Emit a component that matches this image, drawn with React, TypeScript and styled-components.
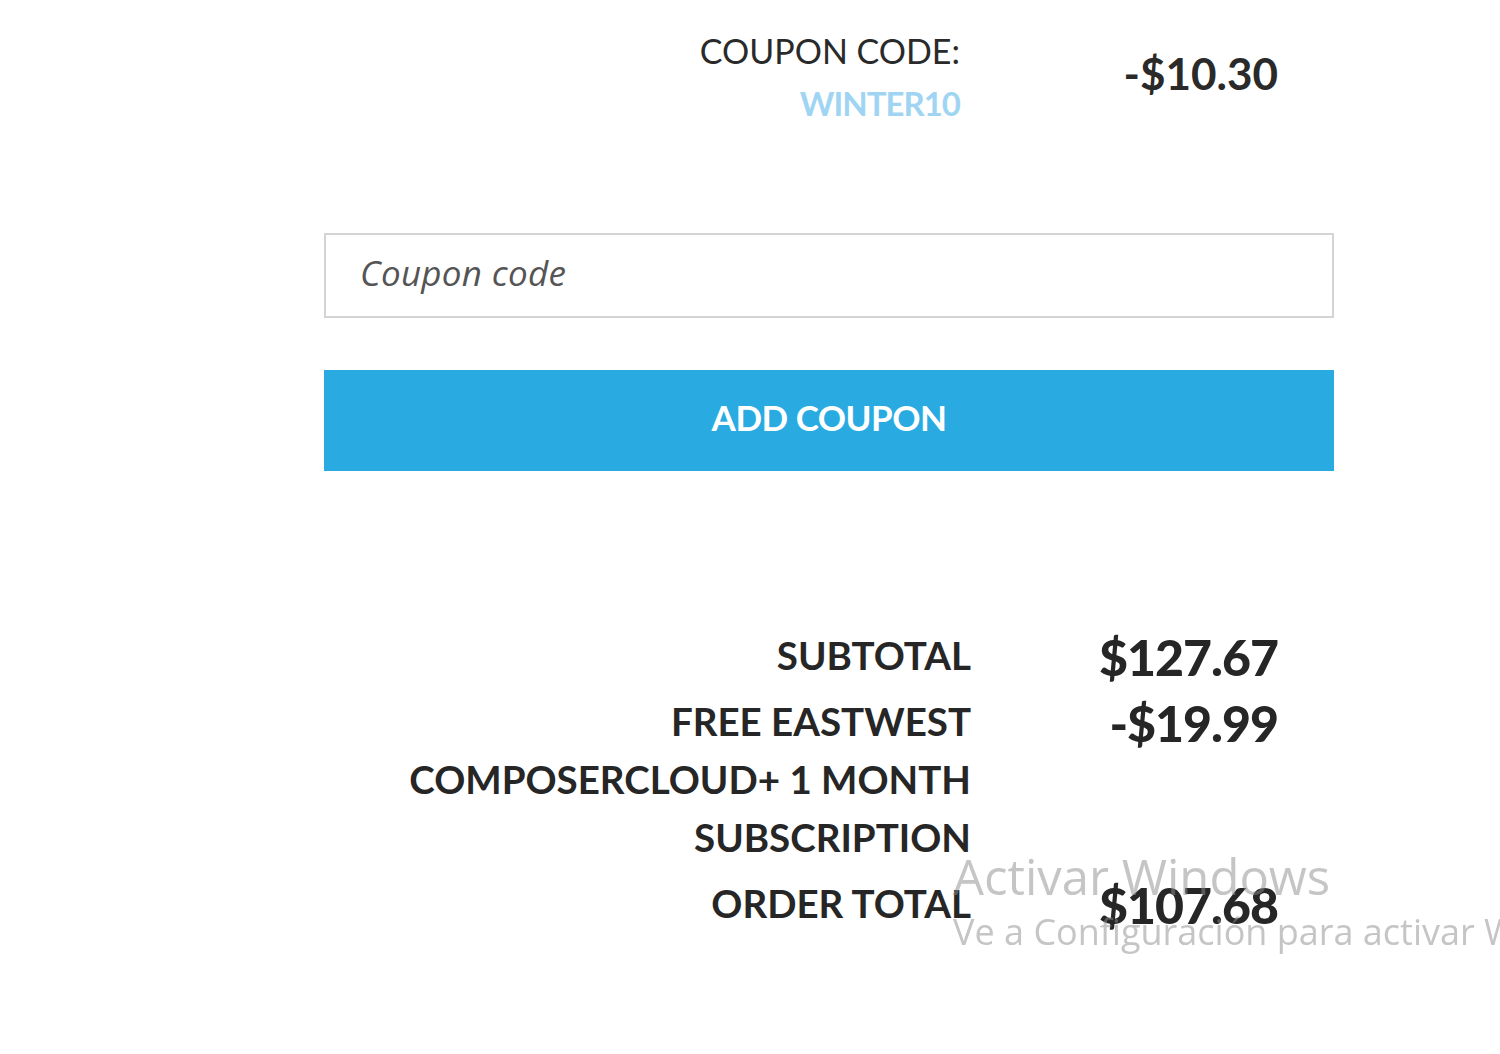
import React from "react";
import styled, { createGlobalStyle } from "styled-components";

const GlobalStyle = createGlobalStyle`
	html, body {
		margin: 0;
		padding: 0;
		background: #fff;
		overflow: hidden;
	}
	body {
		font-family: Lato, "Liberation Sans", sans-serif;
		color: #262626;
	}
`;

const Page = styled.div`
	width: 1010px;
	margin-left: 324px;
	padding-top: 25px;
	height: 1054px;
	box-sizing: border-box;
`;

const SummaryRow = styled.div<{ $valueWidth: number }>`
	display: grid;
	grid-template-columns: 1fr ${p => p.$valueWidth}px;
	padding-right: 56px;
	align-items: start;
`;

const CouponLabel = styled.div`
	text-align: right;
	font-size: 34px;
	line-height: 52px;
	font-weight: 400;
	color: #2a2a2a;
`;

const CouponName = styled.div`
	color: #9fd4f2;
	font-weight: 700;
	font-size: 33px;
	letter-spacing: -1px;
`;

const CouponValue = styled.div`
	text-align: right;
	font-size: 44px;
	font-weight: 700;
	line-height: 52px;
	padding-top: 22px;
	color: #2a2a2a;
`;

const CouponForm = styled.div`
	display: flex;
	flex-direction: column;
	gap: 52px;
	margin-top: 104px;
`;

const CouponInput = styled.input`
	height: 85px;
	box-sizing: border-box;
	border: 2px solid #d4d4d4;
	padding: 0 34px 6px;
	font-family: "Open Sans", "Liberation Sans", sans-serif;
	font-size: 35px;
	font-style: italic;
	letter-spacing: 0.3px;
	color: #333;
	outline: none;
	&::placeholder {
		color: #555;
	}
`;

const AddButton = styled.button`
	height: 101px;
	border: none;
	padding: 0 0 8px;
	background: #29abe2;
	color: #fff;
	font-family: Lato, "Liberation Sans", sans-serif;
	font-size: 35px;
	font-weight: 700;
	letter-spacing: -0.5px;
	cursor: pointer;
`;

const Totals = styled.div`
	display: flex;
	flex-direction: column;
	gap: 8px;
	margin-top: 155px;
`;

const TotalLabel = styled.div`
	text-align: right;
	font-size: 38.5px;
	font-weight: 700;
	line-height: 58px;
	color: #262626;
`;

const TotalValue = styled.div`
	text-align: right;
	font-size: 50px;
	font-weight: 900;
	line-height: 54px;
	padding-top: 4px;
	letter-spacing: -1px;
	color: #262626;
`;

const Watermark = styled.div`
	position: fixed;
	left: 953px;
	top: 844px;
	font-family: "Open Sans", "Noto Sans", sans-serif;
	color: rgba(140, 140, 140, 0.5);
	white-space: nowrap;
	pointer-events: none;
`;

const WatermarkTitle = styled.div`
	font-size: 49px;
	line-height: 64px;
`;

const WatermarkText = styled.div`
	font-size: 36px;
	line-height: 48px;
`;

const totals = [
	{ label: "SUBTOTAL", value: "$127.67" },
	{ label: <>FREE EASTWEST<br />COMPOSERCLOUD+ 1 MONTH<br />SUBSCRIPTION</>, value: "-$19.99" },
	{ label: "ORDER TOTAL", value: "$107.68" },
];

const App: React.FC = () => {
	return (
		<>
			<GlobalStyle />
			<Page>
				<SummaryRow $valueWidth={318}>
					<CouponLabel>
						COUPON CODE:
						<CouponName>WINTER10</CouponName>
					</CouponLabel>
					<CouponValue>-$10.30</CouponValue>
				</SummaryRow>
				<CouponForm>
					<CouponInput placeholder="Coupon code" />
					<AddButton>ADD COUPON</AddButton>
				</CouponForm>
				<Totals>
					{totals.map((row, i) => (
						<SummaryRow key={i} $valueWidth={307}>
							<TotalLabel>{row.label}</TotalLabel>
							<TotalValue>{row.value}</TotalValue>
						</SummaryRow>
					))}
				</Totals>
			</Page>
			<Watermark>
				<WatermarkTitle>Activar Windows</WatermarkTitle>
				<WatermarkText>Ve a Configuración para activar Windows.</WatermarkText>
			</Watermark>
		</>
	);
};

export default App;
